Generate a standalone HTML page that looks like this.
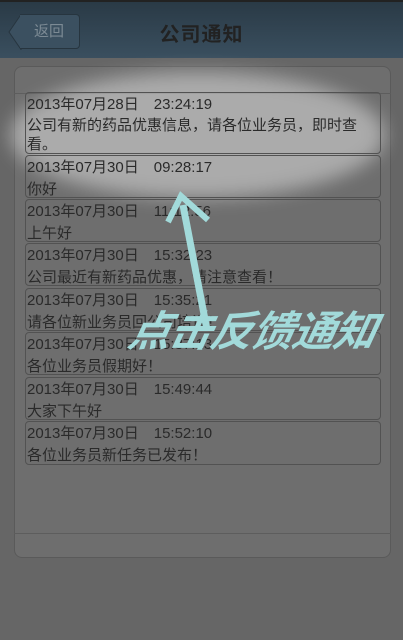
<!DOCTYPE html>
<html><head><meta charset="utf-8"><style>
*{margin:0;padding:0;box-sizing:border-box}
body{width:403px;height:640px;overflow:hidden;background:#666;font-family:"Liberation Sans","Noto Sans CJK SC",sans-serif;position:relative}
.hdr{position:absolute;left:0;top:0;width:403px;height:58px;background:linear-gradient(#2a3a46,#3a4f5f);border-top:2px solid #222}
.back{position:absolute;left:20px;top:12px;width:60px;height:35px;border:1px solid #27353f;border-left:none;border-radius:0 4px 4px 0;background:#3b5060;color:#7c8a94;font-size:15px;line-height:33px;padding-left:14px}
.title{position:absolute;left:0;width:403px;top:16px;text-align:center;font-size:20px;color:#222;font-weight:bold;letter-spacing:1px}
.card{position:absolute;left:14px;top:66px;width:377px;height:492px;border:1px solid #5a5a5a;border-radius:8px;background:#6e6e6e}
.ln{position:absolute;left:14px;width:377px;height:1px;background:#5d5d5d}
.it{position:absolute;left:25px;width:356px;border:1px solid #525252;border-radius:4px;font-size:15px;color:#2a2a2a;line-height:22px;padding:1px 0 0 1px}
.glow{position:absolute;left:10px;top:72px;width:375px;height:126px;border-radius:50%;background:rgba(255,255,255,.42);filter:blur(9px)}
.big{position:absolute;left:130px;top:298px;font-size:42px;font-weight:bold;font-style:italic;color:#a2dada;transform:skewX(-12deg);letter-spacing:-1px;white-space:nowrap}
</style></head><body>
<div class="hdr"><svg style="position:absolute;left:8px;top:12px" width="14" height="36"><path d="M13 0.5 L1 18 L13 35.5 Z" fill="#3b5060" stroke="#27353f"/><rect x="12" y="1" width="3" height="34" fill="#3b5060"/></svg><div class="back">返回</div><div class="title">公司通知</div></div>
<div class="card"></div>
<div class="ln" style="top:93px"></div>
<div class="ln" style="top:533px"></div>
<div class="glow"></div>
<div class="it" style="top:92px;height:62px">2013年07月28日　23:24:19<br><span style="line-height:19px;display:block">公司有新的药品优惠信息，请各位业务员，即时查看。</span></div>
<div class="it" style="top:155px;height:43px">2013年07月30日　09:28:17<br>你好</div>
<div class="it" style="top:199px;height:43px">2013年07月30日　11:12:56<br>上午好</div>
<div class="it" style="top:243px;height:43px">2013年07月30日　15:32:23<br>公司最近有新药品优惠，请注意查看！</div>
<div class="it" style="top:288px;height:43px">2013年07月30日　15:35:21<br>请各位新业务员回公司培训！</div>
<div class="it" style="top:332px;height:43px">2013年07月30日　15:37:13<br>各位业务员假期好！</div>
<div class="it" style="top:377px;height:43px">2013年07月30日　15:49:44<br>大家下午好</div>
<div class="it" style="top:421px;height:44px">2013年07月30日　15:52:10<br>各位业务员新任务已发布！</div>
<svg style="position:absolute;left:0;top:0" width="403" height="640"><path d="M207 330 L183 205" stroke="#a2dada" stroke-width="7"/><path d="M168 222 L181 196 L208 220" stroke="#a2dada" stroke-width="6" fill="none"/></svg>
<div class="big">点击反馈通知</div>
</body></html>
